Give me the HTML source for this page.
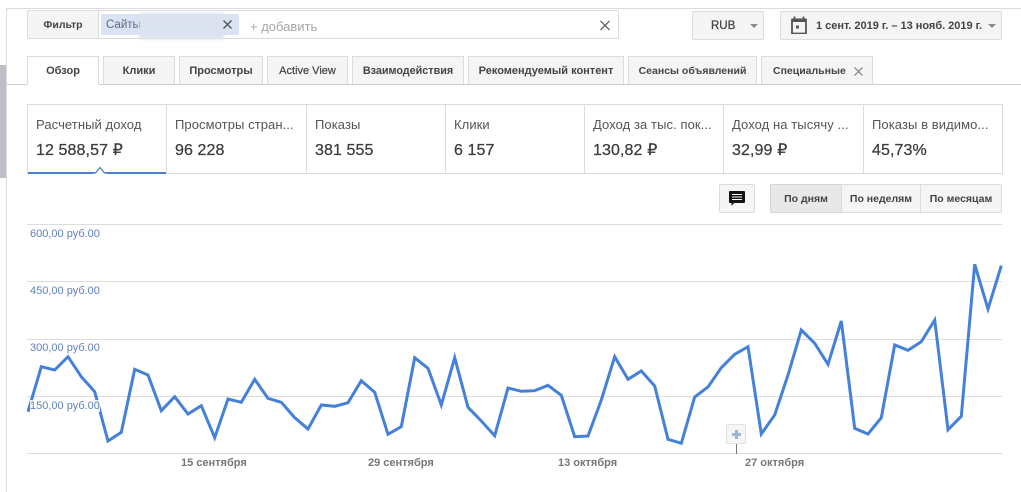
<!DOCTYPE html>
<html lang="ru"><head><meta charset="utf-8"><style>
html,body{margin:0;padding:0;background:#fff}
body{width:1021px;height:492px;position:relative;overflow:hidden;font-family:"Liberation Sans",sans-serif;color:#444}
div,span.a{position:absolute;box-sizing:border-box;white-space:nowrap}
.btn{background:#f5f5f5;border:1px solid #dcdcdc;border-radius:2px;text-align:center;font-weight:bold;font-size:11px;color:#444}
.tab{top:56px;height:29px;background:#f5f5f5;border:1px solid #dcdcdc;border-bottom:1px solid #d0d0d0;font-weight:bold;font-size:11px;line-height:29px;text-align:center;color:#444}
.lab{top:117px;font-size:13px;color:#555;line-height:15px;letter-spacing:.08px}
.val{top:141px;font-size:16px;color:#3c3c3c;line-height:19px;letter-spacing:.1px;-webkit-text-stroke:.25px #3c3c3c}
.sep{top:104px;width:1px;height:70px;background:#dcdcdc}
.g{left:27px;width:975px;height:1px;background:#dcdcdc}
.y{left:30px;font-size:11px;color:#5f81bd;line-height:12px}
.x{top:457px;font-size:11px;font-weight:bold;color:#777;line-height:13px}
</style></head><body>
<div style="left:6px;top:8px;width:1015px;height:1px;background:#dcdcdc"></div>
<div style="left:6px;top:8px;width:1px;height:484px;background:#dcdcdc"></div>
<div style="left:0;top:65px;width:6px;height:113px;background:#bcbfc4"></div>

<div style="left:27px;top:10px;width:592px;height:29px;background:#fff;border:1px solid #dcdcdc;border-radius:2px"></div>
<div class="btn" style="left:27px;top:10px;width:72px;height:29px;line-height:28px;border-radius:2px 0 0 2px;font-size:10.5px">Фильтр</div>
<div style="left:101px;top:14px;width:138px;height:21px;background:#dae3f3;border-radius:2px"></div>
<div style="left:106px;top:18px;font-size:11.5px;color:#5b6b85;line-height:14px">Сайты</div>
<div style="left:139px;top:13px;width:85px;height:26px;background:#dbe3ef;filter:blur(1.5px)"></div>
<svg style="position:absolute;left:222px;top:19px" width="11" height="11" viewBox="0 0 11 11"><path d="M1.500 1.500l8 8M9.500 1.500l-8 8" stroke="#555" stroke-width="1.400" fill="none"/></svg>
<div style="left:250px;top:19px;font-size:13px;color:#a6a6a6;line-height:15px">+ добавить</div>
<svg style="position:absolute;left:600px;top:20px" width="10" height="11" viewBox="0 0 10 11"><path d="M.5 1l9 9M9.500 1l-9 9" stroke="#666" stroke-width="1.300" fill="none"/></svg>

<div class="btn" style="left:692px;top:11px;width:72px;height:29px;line-height:28px;text-align:left;padding-left:18px;font-weight:normal;font-size:11.500px;-webkit-text-stroke:.25px #444">RUB</div>
<div style="left:750px;top:24px;width:0;height:0;border:4px solid transparent;border-top:4px solid #888"></div>
<div class="btn" style="left:780px;top:11px;width:222px;height:29px;line-height:28px;text-align:left;padding-left:35px;font-size:11px;letter-spacing:-.02px">1 сент. 2019 г. – 13 нояб. 2019 г.</div>
<svg style="position:absolute;left:791px;top:16px" width="16" height="18" viewBox="0 0 16 18"><path d="M1 3.500h14v14H1zM3.500 0.500v3M12.500 0.500v3" fill="none" stroke="#555" stroke-width="1.800"/><rect x="1" y="2.500" width="14" height="3.500" fill="#555"/><rect x="5" y="9.500" width="3" height="3" fill="#555"/></svg>
<div style="left:988px;top:24px;width:0;height:0;border:4px solid transparent;border-top:4px solid #888"></div>

<div style="left:6px;top:84px;width:1015px;height:1px;background:#d0d0d0"></div>
<div class="tab" style="left:27px;width:72px;background:#fff;border-bottom:1px solid #fff">Обзор</div>
<div class="tab" style="left:103px;width:72px">Клики</div>
<div class="tab" style="left:179px;width:84px">Просмотры</div>
<div class="tab" style="left:267px;width:81px;font-weight:normal;-webkit-text-stroke:.2px #444">Active View</div>
<div class="tab" style="left:352px;width:112px;font-size:10.800px">Взаимодействия</div>
<div class="tab" style="left:468px;width:156px">Рекомендуемый контент</div>
<div class="tab" style="left:628px;width:129px;font-size:10.500px">Сеансы объявлений</div>
<div class="tab" style="left:761px;width:112px;text-align:left;padding-left:11px;font-size:10.500px">Специальные</div>
<svg style="position:absolute;left:854px;top:67px" width="9" height="9" viewBox="0 0 9 9"><path d="M.5.5l8 8M8.500.5l-8 8" stroke="#777" stroke-width="1.100" fill="none"/></svg>

<div style="left:27px;top:104px;width:976px;height:70px;border:1px solid #dcdcdc"></div>
<div class="sep" style="left:166px"></div><div class="sep" style="left:306px"></div><div class="sep" style="left:445px"></div><div class="sep" style="left:584px"></div><div class="sep" style="left:723px"></div><div class="sep" style="left:863px"></div>
<div style="left:28px;top:172px;width:138px;height:2px;background:#4f7fc4"></div>
<svg style="position:absolute;left:93px;top:166px" width="14" height="8" viewBox="0 0 14 8"><path d="M0 7h2.500L7 1.500 11.500 7H14v2H0z" fill="#fff"/><path d="M0 7h2.500L7 1.500 11.500 7H14" fill="none" stroke="#4f7fc4" stroke-width="1.300"/></svg>

<div class="lab" style="left:36px">Расчетный доход</div><div class="val" style="left:36px">12 588,57 ₽</div>
<div class="lab" style="left:175px">Просмотры стран...</div><div class="val" style="left:175px">96 228</div>
<div class="lab" style="left:315px">Показы</div><div class="val" style="left:315px">381 555</div>
<div class="lab" style="left:454px">Клики</div><div class="val" style="left:454px">6 157</div>
<div class="lab" style="left:593px">Доход за тыс. пок...</div><div class="val" style="left:593px">130,82 ₽</div>
<div class="lab" style="left:732px">Доход на тысячу ...</div><div class="val" style="left:732px">32,99 ₽</div>
<div class="lab" style="left:872px">Показы в видимо...</div><div class="val" style="left:872px">45,73%</div>

<div class="btn" style="left:719px;top:184px;width:36px;height:29px"></div>
<svg style="position:absolute;left:729px;top:191px" width="16" height="16" viewBox="0 0 16 16"><path d="M1 0h14a1 1 0 0 1 1 1v10a1 1 0 0 1-1 1H5l-2.500 3v-3H1a1 1 0 0 1-1-1V1a1 1 0 0 1 1-1z" fill="#111"/><path d="M3 3.500h10M3 6h10M3 8.500h10" stroke="#fff" stroke-width="1"/></svg>
<div class="btn" style="left:770px;top:184px;width:72px;height:29px;line-height:29px;background:#e8e8e8;border-color:#d5d5d5;border-radius:2px 0 0 2px;font-size:10.500px">По дням</div>
<div class="btn" style="left:841px;top:184px;width:80px;height:29px;line-height:29px;border-radius:0;font-size:10.500px">По неделям</div>
<div class="btn" style="left:920px;top:184px;width:82px;height:29px;line-height:29px;border-radius:0 2px 2px 0;font-size:10.500px">По месяцам</div>

<div class="g" style="top:224px"></div><div class="g" style="top:281px"></div><div class="g" style="top:339px"></div><div class="g" style="top:396px"></div><div class="g" style="top:453px"></div>

<svg style="position:absolute;left:0;top:0" width="1021" height="492"><polyline fill="none" stroke="#4580d9" stroke-width="3" stroke-linejoin="miter" points="28,411.700 41.300,366.700 54.700,370 68,356.700 81.300,376.700 94.700,391.700 108,441 121.300,432.300 134.700,369.300 148,375 161.300,410.700 174.700,396.700 188,414 201.300,405.700 214.700,437.700 228,399 241.300,402.300 254.700,379.300 268,398.300 281.300,402.300 294.700,417.700 308,429 321.300,405 334.700,406.300 348,402.700 361.300,380.700 374.700,392.300 388,434.300 401.300,426.700 414.700,357.700 428,368.300 441.300,405 454.700,357.700 468,407.300 481.300,421 494.700,435.700 508,388 521.300,391.300 534.700,390.700 548,385.300 561.300,395.300 574.700,436.700 588,436 601.300,400 614.700,356.700 628,379.300 641.300,371 654.700,386 668,439.300 681.300,443.300 694.700,397 708,387 721.300,367.700 734.700,354.300 748,346.700 761.300,434 774.700,415 788,375 801.300,330 814.700,343.300 828,364.300 841.300,321 854.700,428.300 868,434 881.300,417.700 894.700,345 908,350.300 921.300,341.700 934.700,320 948,429.700 961.300,416.300 974.700,264.300 988,309 1001.300,265.700"/></svg>

<div class="y" style="top:228px">600,00 руб.00</div>
<div class="y" style="top:285px">450,00 руб.00</div>
<div class="y" style="top:342px">300,00 руб.00</div>
<div class="y" style="top:400px;background:rgba(255,255,255,.85)">150,00 руб.00</div>

<div class="x" style="left:181px">15 сентября</div>
<div class="x" style="left:368px">29 сентября</div>
<div class="x" style="left:558px">13 октября</div>
<div class="x" style="left:745px">27 октября</div>

<div style="left:736px;top:444px;width:1px;height:10px;background:#777"></div>
<div style="left:726px;top:424px;width:20px;height:20px;background:#f6f6f6;border:1px solid #e2e2e2;border-radius:2px"></div>
<svg style="position:absolute;left:731px;top:429px" width="11" height="11" viewBox="0 0 11 11"><path d="M5.500 1v9M1 5.500h9" stroke="#9db4d0" stroke-width="3"/></svg>
</body></html>
